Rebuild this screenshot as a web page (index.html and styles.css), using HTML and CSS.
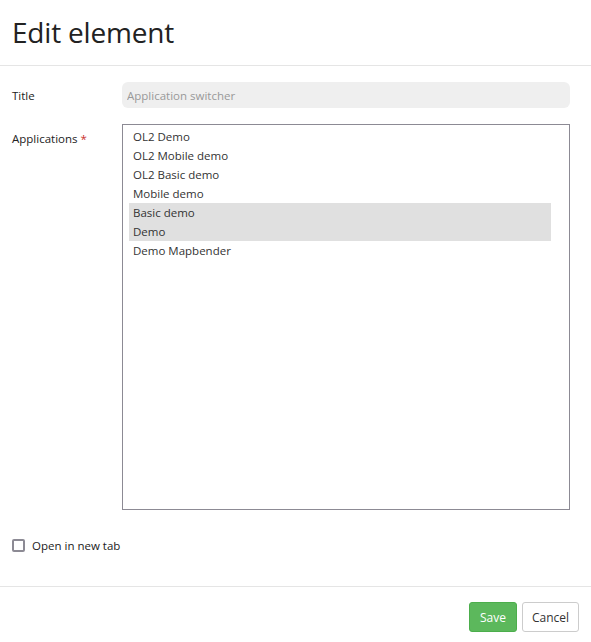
FILE: index.html
```html
<!DOCTYPE html>
<html>
<head>
<meta charset="utf-8">
<link rel="stylesheet" href="styles.css">
</head>
<body>
<div class="dialog">
  <header class="dialog-header">
    <h1 class="dialog-title">Edit element</h1>
  </header>
  <form class="dialog-body">
    <div class="form-row">
      <label class="form-label">Title</label>
      <input class="text-input" type="text" placeholder="Application switcher">
    </div>
    <div class="form-row">
      <label class="form-label form-label-tall">Applications <span class="required">*</span></label>
      <div class="listbox" role="listbox">
        <div class="option">OL2 Demo</div>
        <div class="option">OL2 Mobile demo</div>
        <div class="option">OL2 Basic demo</div>
        <div class="option">Mobile demo</div>
        <div class="option selected">Basic demo</div>
        <div class="option selected">Demo</div>
        <div class="option">Demo Mapbender</div>
      </div>
    </div>
    <label class="check-row">
      <span class="checkbox"></span>
      <span class="check-label">Open in new tab</span>
    </label>
  </form>
  <footer class="dialog-footer">
    <button class="btn btn-save" type="button">Save</button>
    <button class="btn btn-cancel" type="button">Cancel</button>
  </footer>
</div>
</body>
</html>
```
FILE: styles.css
```css
html, body {
  margin: 0;
  padding: 0;
  background: #fff;
}
body {
  font-family: "Open Sans", "Noto Sans", sans-serif;
  font-size: 11.5px;
  color: #333;
}
.dialog {
  width: 591px;
}
.dialog-header {
  height: 66px;
  border-bottom: 1px solid #e5e5e5;
  padding: 0 12px;
  display: flex;
  align-items: center;
  box-sizing: border-box;
}
.dialog-title {
  margin: 0 0 2px 0;
  font-size: 28px;
  font-weight: 400;
  color: #222;
  letter-spacing: -0.2px;
}
.dialog-body {
  padding: 16px 21px 0 12px;
  height: 521px;
  box-sizing: border-box;
  border-bottom: 1px solid #e5e5e5;
}
.form-row {
  display: grid;
  grid-template-columns: 110px 1fr;
  margin-bottom: 16px;
}
.form-label {
  color: #222;
  line-height: 24px;
  padding-top: 2px;
}
.form-label-tall {
  line-height: 30px;
  padding-top: 0;
}
.required {
  color: #c9302c;
}
.text-input {
  height: 26px;
  box-sizing: border-box;
  border: none;
  background: #efefef;
  border-radius: 6px;
  padding: 0 5px;
  font-family: inherit;
  font-size: 11.5px;
  color: #555;
  outline: none;
}
.text-input::placeholder {
  color: #999;
}
.listbox {
  height: 386px;
  box-sizing: border-box;
  border: 1px solid #8c8a94;
  padding: 2px 18px 0 6px;
}
.option {
  height: 19px;
  line-height: 19px;
  padding-left: 4px;
  color: #333;
}
.option.selected {
  background: #e0e0e0;
}
.check-row {
  display: flex;
  align-items: center;
  gap: 7px;
  margin-top: 29px;
  height: 13px;
}
.checkbox {
  width: 13px;
  height: 13px;
  box-sizing: border-box;
  border: 2px solid #8c8a94;
  border-radius: 2px;
  flex: none;
}
.check-label {
  color: #222;
  line-height: 13px;
}
.dialog-footer {
  display: flex;
  justify-content: flex-end;
  gap: 5px;
  padding: 15px 12px 0 0;
}
.btn {
  height: 30px;
  box-sizing: border-box;
  border-radius: 3px;
  font-family: inherit;
  font-size: 12px;
  padding: 0;
  cursor: pointer;
}
.btn-save {
  background: #5cb85c;
  border: 1px solid #4cae4c;
  color: #fff;
  width: 48px;
}
.btn-cancel {
  background: #fff;
  border: 1px solid #ccc;
  color: #333;
  width: 57px;
}
```
